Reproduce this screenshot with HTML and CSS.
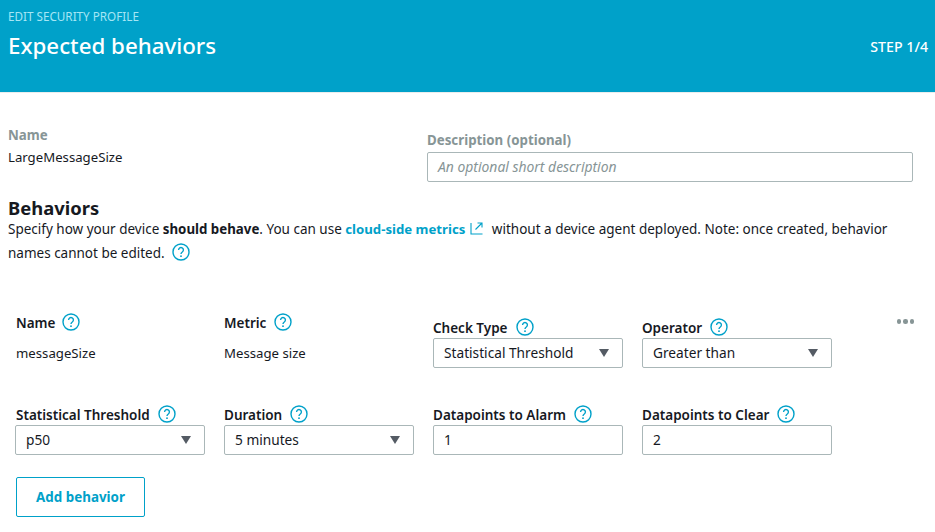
FILE: index.html
```html
<!DOCTYPE html>
<html lang="en">
<head>
<meta charset="utf-8">
<title>Expected behaviors</title>
<link rel="stylesheet" href="styles.css">
</head>
<body>
<svg class="sprite" width="0" height="0" aria-hidden="true">
  <symbol id="help" viewBox="0 0 18 18">
    <circle cx="9" cy="9" r="8" fill="none" stroke="#00a1c9" stroke-width="1.4"/>
    <path d="M6.6 7a2.4 2.4 0 1 1 3.7 2c-.9.6-1.3 1-1.3 2.1" fill="none" stroke="#00a1c9" stroke-width="1.4"/>
    <rect x="8.2" y="12.4" width="1.6" height="1.6" fill="#00a1c9"/>
  </symbol>
</svg>
<header class="banner">
  <div class="crumb">EDIT SECURITY PROFILE</div>
  <div class="banner-row">
    <h1>Expected behaviors</h1>
    <span class="step">STEP 1/4</span>
  </div>
</header>
<main class="content">
  <section class="profile">
    <div class="profile-name">
      <div class="muted-label">Name</div>
      <div class="value">LargeMessageSize</div>
    </div>
    <div class="profile-desc">
      <div class="muted-label">Description (optional)</div>
      <div class="box desc-box">An optional short description</div>
    </div>
  </section>
  <h2>Behaviors</h2>
  <p class="intro">Specify how your device <b>should behave</b>. You can use <a class="link">cloud-side metrics</a><svg class="ext" width="13" height="13" viewBox="0 0 13 13"><path d="M1 1V12H12.5M5.5 7.5L11.5 1.5M7.5 1H12V5.5" fill="none" stroke="#00a1c9" stroke-width="1.1"/></svg> without a device agent deployed. Note: once created, behavior<br>names cannot be edited.<svg class="help intro-help"><use href="#help"/></svg></p>
  <section class="behavior">
    <div class="row row-top">
      <div class="field">
        <div class="label">Name<svg class="help"><use href="#help"/></svg></div>
        <div class="plain">messageSize</div>
      </div>
      <div class="field">
        <div class="label">Metric<svg class="help"><use href="#help"/></svg></div>
        <div class="plain">Message size</div>
      </div>
      <div class="field field-low">
        <div class="label">Check Type<svg class="help"><use href="#help"/></svg></div>
        <div class="box select">Statistical Threshold<i class="caret"></i></div>
      </div>
      <div class="field field-low">
        <div class="label">Operator<svg class="help"><use href="#help"/></svg></div>
        <div class="box select">Greater than<i class="caret"></i></div>
      </div>
      <div class="dots"><i></i><i></i><i></i></div>
    </div>
    <div class="row row-bottom">
      <div class="field">
        <div class="label">Statistical Threshold<svg class="help"><use href="#help"/></svg></div>
        <div class="box select">p50<i class="caret"></i></div>
      </div>
      <div class="field">
        <div class="label">Duration<svg class="help"><use href="#help"/></svg></div>
        <div class="box select">5 minutes<i class="caret"></i></div>
      </div>
      <div class="field">
        <div class="label">Datapoints to Alarm<svg class="help"><use href="#help"/></svg></div>
        <div class="box">1</div>
      </div>
      <div class="field">
        <div class="label">Datapoints to Clear<svg class="help"><use href="#help"/></svg></div>
        <div class="box">2</div>
      </div>
    </div>
    <button class="add" type="button">Add behavior</button>
  </section>
</main>
</body>
</html>
```
FILE: styles.css
```css
* { box-sizing: border-box; }
html, body { margin: 0; padding: 0; }
body {
  background: #fff;
  color: #16191f;
  font-family: "Noto Sans", "Open Sans", sans-serif;
  font-size: 14px;
  line-height: 20px;
  overflow: hidden;
  height: 532px;
}
.sprite { position: absolute; }
.banner {
  height: 93px;
  background: #00a1c9;
  border-bottom: 1px solid #eaeded;
  padding: 8px 7px 0 8px;
  color: #fff;
}
.crumb { font-size: 11.7px; line-height: 16px; color: #a6e6f5; }
.banner-row { display: flex; justify-content: space-between; align-items: center; margin-top: 2px; }
h1 { margin: 0; font-size: 22.3px; line-height: 40px; font-weight: 500; }
.step { font-size: 14.2px; font-weight: 500; padding-top: 2px; }
.content { padding: 0 8px; }
.profile { display: flex; padding-top: 32px; }
.profile-name { width: 419px; }
.profile-desc { width: 486px; padding-top: 5px; }
.muted-label { font-weight: 700; color: #879596; font-size: 13.3px; }
.value { font-size: 13.2px; color: #16191f; margin-top: 2px; }
.box {
  height: 30px;
  border: 1px solid #aab7b8;
  border-radius: 2px;
  padding: 0 10px;
  line-height: 28px;
  font-size: 13.7px;
  color: #16191f;
  background: #fff;
}
.desc-box { margin-top: 2px; font-style: italic; color: #879596; font-size: 13.9px; }
h2 { margin: 14px 0 0; font-size: 18.4px; line-height: 24px; font-weight: 700; }
.intro { margin: -3px 0 0; font-size: 13.5px; line-height: 24px; }
.intro b { font-size: 13.3px; }
.link { color: #00a1c9; font-weight: 700; font-size: 13.2px; }
.ext { margin: 0 5px 0 5px; vertical-align: -1px; }
.help { width: 18px; height: 18px; margin: -3px 0 0 8px; flex: none; }
.intro-help { margin: 0 0 0 7px; vertical-align: -3px; }
.behavior { padding: 0 0 0 7px; margin-top: 48px; }
.row { display: grid; grid-template-columns: repeat(4, 190px); column-gap: 19px; position: relative; }
.row-top { height: 55px; }
.row-bottom { margin-top: 37px; }
.field { min-width: 0; }
.field-low { padding-top: 5px; }
.label { display: flex; align-items: center; height: 20px; font-size: 13.5px; font-weight: 600; }
.row-top .field:first-child .label, .row-bottom .field:first-child .label { padding-left: 1px; }
.row-top .field:first-child .help { margin-left: 7px; }
.plain { font-size: 13.2px; margin-top: 10px; }
.row-top .field:first-child .plain { padding-left: 1px; }
.select { position: relative; }
.caret {
  position: absolute;
  right: 13px;
  top: 10px;
  width: 0;
  height: 0;
  border-left: 5.5px solid transparent;
  border-right: 5.5px solid transparent;
  border-top: 8px solid #545b64;
}
.dots { position: absolute; right: 13px; top: 6px; display: flex; gap: 2px; }
.dots i { width: 4.5px; height: 4.5px; border-radius: 50%; background: #879596; }
.add {
  display: block;
  margin: 22px 0 0 1px;
  width: 129px;
  height: 40px;
  background: #fff;
  border: 1px solid #00a1c9;
  border-radius: 2px;
  color: #00a1c9;
  font-family: inherit;
  font-size: 13.4px;
  font-weight: 700;
}
```
